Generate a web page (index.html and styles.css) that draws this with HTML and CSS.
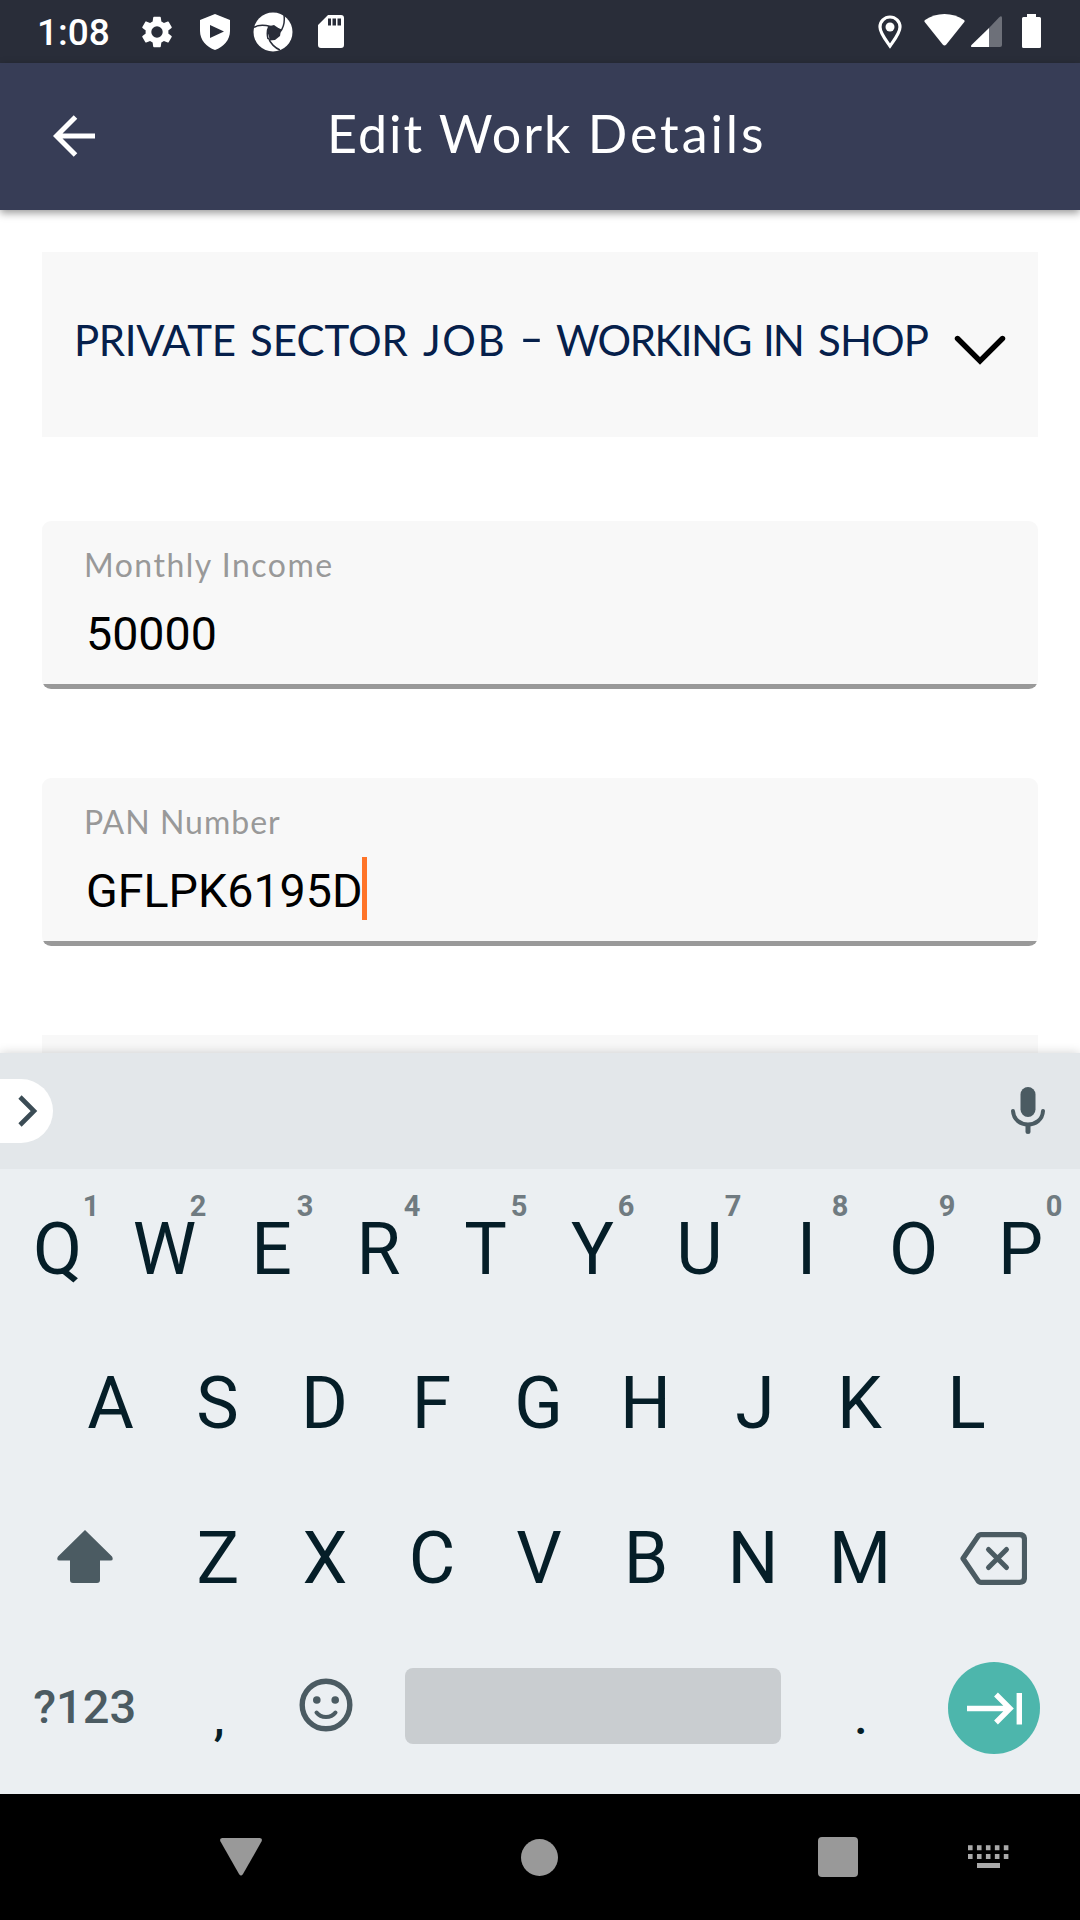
FILE: index.html
```html
<!DOCTYPE html>
<html lang="en">
<head>
<meta charset="utf-8">
<title>Edit Work Details</title>
<link rel="stylesheet" href="styles.css">
</head>
<body>
<div class="screen">
  <div class="status">
    <span class="clock">1:08</span>
    <svg class="gear" width="38" height="38" viewBox="0 0 24 24"><path fill="#fff" d="M19.14 12.94c.04-.3.06-.61.06-.94s-.02-.64-.07-.94l2.03-1.58a.49.49 0 0 0 .12-.61l-1.92-3.32a.49.49 0 0 0-.59-.22l-2.39.96c-.5-.38-1.03-.7-1.62-.94l-.36-2.54A.48.48 0 0 0 13.92 2.400h-3.840c-.24 0-.43.17-.47.41l-.36 2.540c-.59.24-1.130.57-1.620.94l-2.390-.96a.48.48 0 0 0-.59.22L2.740 8.870a.48.48 0 0 0 .12.61l2.030 1.580c-.05.3-.09.63-.09.94s.02.64.07.94l-2.030 1.580a.49.49 0 0 0-.12.61l1.920 3.320c.12.22.37.29.59.22l2.390-.96c.5.38 1.030.7 1.620.94l.36 2.540c.05.24.24.41.48.41h3.840c.24 0 .44-.17.47-.41l.36-2.540c.59-.24 1.130-.56 1.620-.94l2.390.96c.22.08.47 0 .59-.22l1.920-3.320a.48.48 0 0 0-.12-.61zM12 15.600a3.600 3.600 0 1 1 0-7.200 3.600 3.600 0 0 1 0 7.200z"/></svg>
    <svg class="shield" width="30" height="36" viewBox="0 0 30 36"><path fill="#fff" fill-rule="evenodd" d="M15 0 30 6v11c0 9-6.500 16-15 19C6.500 33 0 26 0 17V6zM10 11v13l14-6.500z"/></svg>
    <svg class="wheel" width="40" height="40" viewBox="0 0 40 40"><circle cx="20" cy="20" r="19.500" fill="#fff"/><path fill="#292d39" d="M15 14.500 21 13l7 5-1 6-5 4-5 .5-2-7z"/><path fill="none" stroke="#292d39" stroke-width="1.500" d="M0 16C5 12 14 12 28 18M31 3c1 7 0 12-4 17M27 38c-5-2-10-7-11.500-12M15 27c-1-4-1-9 1-13"/></svg>
    <svg class="sd" width="26" height="33" viewBox="0 0 26 33"><path fill="#fff" fill-rule="evenodd" d="M10 0h13a3 3 0 0 1 3 3v27a3 3 0 0 1-3 3H3a3 3 0 0 1-3-3V10zM10 3.500v7h3v-7zM14.500 3.500v7h3.500v-7zM19.500 3.500v7H23v-7z"/></svg>
    <span class="fill"></span>
    <svg class="pin" width="24" height="34" viewBox="0 0 24 34"><path fill="none" stroke="#fff" stroke-width="3.200" d="M12 31C7 24 2 18 2 12a10 10 0 0 1 20 0c0 6-5 12-10 19z"/><circle cx="12" cy="12" r="4.500" fill="#fff"/></svg>
    <svg class="wifi" width="41" height="32" viewBox="0 0 41 32"><path fill="#fff" d="M1 6C12-2 29-2 40 6q1 1 .3 2L22.300 30.500q-1.800 2-3.600 0L.7 8Q0 7 1 6z"/></svg>
    <svg class="signal" width="31" height="31" viewBox="0 0 31 31"><path fill="#6d7079" d="M18 12 28 1.500Q31-1 31 2v27q0 2-2 2H18z"/><path fill="#fff" d="M18 12v19H1.500Q-1 31 .5 29z"/></svg>
    <svg class="battery" width="19" height="34" viewBox="0 0 19 34"><path fill="#fff" d="M5 0h9v3h3.500q1.500 0 1.500 1.500v28q0 1.500-1.500 1.500h-16Q0 34 0 32.500v-28Q0 3 1.500 3H5z"/></svg>
  </div>

  <div class="appbar">
    <svg class="back" width="43" height="42" viewBox="0 0 43 42"><path fill="none" stroke="#fff" stroke-width="5" d="M22.500 2 3.500 21l19 19M3.500 21H42"/></svg>
    <div class="title">Edit Work <span class="title-last">Details</span></div>
  </div>

  <div class="form">
    <div class="select">
      <div class="select-text"><span class="w-private">PRIVATE</span> <span>SECTOR</span> <span class="w-job">JOB</span> <span class="w-dash">-</span> <span class="w-working">WORKING</span> <span class="w-in">IN</span> <span class="w-shop">SHOP</span></div>
      <svg class="chevron" width="52" height="30" viewBox="0 0 52 30"><path fill="none" stroke="#000" stroke-width="5.400" stroke-linecap="round" d="M3.500 3.500 26 26 48.500 3.500"/></svg>
    </div>
    <div class="field">
      <div class="label income">Monthly Income</div>
      <div class="value">50000</div>
    </div>
    <div class="field">
      <div class="label pan">PAN Number</div>
      <div class="value">GFLPK6195D<span class="caret"></span></div>
    </div>
    <div class="next"></div>
  </div>

  <div class="keyboard">
    <div class="strip">
      <div class="expand"><svg width="20" height="32" viewBox="0 0 20 32"><path fill="none" stroke="#3b4c55" stroke-width="4.600" d="M2 2l14 14L2 30"/></svg></div>
      <svg width="34" height="48" viewBox="0 0 34 48"><rect x="9.500" y="0" width="15" height="30" rx="7.500" fill="#4b5b62"/><path fill="none" stroke="#4b5b62" stroke-width="4" stroke-linecap="round" d="M2 24c1 18 29 18 30 0"/><path stroke="#4b5b62" stroke-width="5" stroke-linecap="round" d="M17 39v5.500"/></svg>
    </div>
    <div class="keys">
      <div class="row ten">
        <div class="key">Q<sup class="hint">1</sup></div><div class="key">W<sup class="hint">2</sup></div><div class="key">E<sup class="hint">3</sup></div><div class="key">R<sup class="hint">4</sup></div><div class="key">T<sup class="hint">5</sup></div><div class="key">Y<sup class="hint">6</sup></div><div class="key">U<sup class="hint">7</sup></div><div class="key">I<sup class="hint">8</sup></div><div class="key">O<sup class="hint">9</sup></div><div class="key">P<sup class="hint">0</sup></div>
      </div>
      <div class="row nine">
        <div class="key">A</div><div class="key">S</div><div class="key">D</div><div class="key">F</div><div class="key">G</div><div class="key">H</div><div class="key key-j">J</div><div class="key">K</div><div class="key">L</div>
      </div>
      <div class="row wide">
        <div class="key shift"><svg width="56" height="54" viewBox="0 0 56 54"><path fill="#4b5b62" d="M28 0 55 26.500q2 4-1.500 4H43V50q0 3-3 3H16q-3 0-3-3V30.500H2.500q-3.500 0-1.500-4z"/></svg></div>
        <div class="key">Z</div><div class="key">X</div><div class="key">C</div><div class="key">V</div><div class="key">B</div><div class="key">N</div><div class="key">M</div>
        <div class="key"><svg width="67" height="53" viewBox="0 0 67 53"><path fill="none" stroke="#4b5b62" stroke-width="5.200" stroke-linejoin="round" d="M21 2.600h38.500q5 0 5 5v37.800q0 5-5 5H21q-2 0-3.500-2.500L3 26.500 17.500 5.100Q19 2.600 21 2.600z"/><path stroke="#4b5b62" stroke-width="5" stroke-linecap="round" d="M28.500 17.500l18 18M46.500 17.500l-18 18"/></svg></div>
      </div>
      <div class="row wide bottom">
        <div class="key mode">?123</div>
        <div class="key punct">,</div>
        <div class="key emoji"><svg width="54" height="54" viewBox="0 0 54 54"><circle cx="27" cy="27" r="23.800" fill="none" stroke="#4b5b62" stroke-width="5.400"/><circle cx="17.800" cy="22" r="3.800" fill="#4b5b62"/><circle cx="36.200" cy="22" r="3.800" fill="#4b5b62"/><path fill="none" stroke="#4b5b62" stroke-width="4" stroke-linecap="round" d="M17.500 34.500c4.500 6 14.500 6 19 0"/></svg></div>
        <div class="space"></div>
        <div class="key punct">.</div>
        <div class="key enter"><svg width="92" height="92" viewBox="0 0 92 92"><circle cx="46" cy="46" r="46" fill="#4db6ac"/><path fill="none" stroke="#fff" stroke-width="5.400" d="M19 46.500h43M48 32.500l14 14-14 14M71.300 31v31.500"/></svg></div>
      </div>
    </div>
  </div>

  <div class="nav">
    <svg class="nav-back" width="42" height="38" viewBox="0 0 42 38"><path fill="#999" d="M2.500 0h37Q43 0 41.500 3.500L23 36q-2 3-4 0L.5 3.500Q-1 0 2.500 0z"/></svg>
    <svg class="nav-home" width="37" height="37" viewBox="0 0 37 37"><circle cx="18.500" cy="18.500" r="18.500" fill="#999"/></svg>
    <svg class="nav-recent" width="40" height="40" viewBox="0 0 40 40"><rect width="40" height="40" rx="4" fill="#999"/></svg>
    <svg class="nav-ime" width="41" height="24" viewBox="0 0 41 24"><path stroke="#aaa" stroke-width="5" stroke-dasharray="4.600 4.350" d="M0 2.800h41M0 11.600h41"/><path stroke="#aaa" stroke-width="5" d="M9 20.500h23"/></svg>
  </div>
</div>
</body>
</html>
```
FILE: styles.css
```css
* { box-sizing: border-box; }
body { margin: 0; background: #fff; font-family: Roboto, sans-serif; }
svg { display: block; flex: none; }
.screen { width: 1080px; height: 1920px; display: flex; flex-direction: column; overflow: hidden; }

.status { height: 63px; background: #292d39; display: flex; align-items: flex-start; padding: 14px 39px 0 37px; }
.clock { color: #fff; font-size: 37px; font-weight: 500; line-height: 38px; width: 101px; }
.gear { margin-top: -1px; }
.shield { margin-left: 24px; }
.wheel { margin: -2px 0 0 23px; }
.sd { margin: 1px 0 0 25px; }
.fill { flex: 1; }
.pin { margin: 1px 22px 0 0; }
.wifi { margin-right: 6px; }
.signal { margin: 2px 20px 0 0; }

.appbar { height: 147px; background: #373d56; display: flex; align-items: center; position: relative; z-index: 1; box-shadow: 0 3px 8px rgba(0, 0, 0, .4); padding: 0 0 1px 53px; }
.title { margin: 0 0 6px 231px; color: #fff; font: 400 52px/60px Lato, sans-serif; letter-spacing: 2px; white-space: nowrap; }
.title-last { letter-spacing: 2.900px; }

.form { height: 843px; padding: 42px 42px 0; overflow: hidden; }
.select { height: 185px; background: #f8f8f8; display: flex; align-items: center; justify-content: space-between; padding: 0 32px; color: #06204b; }
.select-text { display: grid; grid-template-columns: 176px 173px 96px 37px 207px 55px auto; margin-bottom: 9px; font: 400 42px/50px Lato, sans-serif; white-space: nowrap; }
.w-private { letter-spacing: -.35px; }
.w-job { letter-spacing: 1.600px; }
.w-dash { transform: translateY(-3px) scaleX(1.600); transform-origin: left; }
.w-working { letter-spacing: -1.500px; }
.w-in { letter-spacing: -2px; }
.w-shop { letter-spacing: -.9px; }
.chevron { margin-top: 10px; }
.field { height: 168px; margin-top: 84px; background: linear-gradient(#f8f8f8 163px, #999 163px); border-radius: 9px; padding: 24px 44px 0; }
.field + .field { margin-top: 89px; }
.label { margin-left: -2px; color: #999; font: 400 32px/40px Lato, sans-serif; white-space: nowrap; }
.income { letter-spacing: 1.500px; }
.pan { letter-spacing: 1px; }
.value { display: flex; align-items: center; height: 63px; margin-top: 17px; color: #000; font-size: 46.600px; }
.caret { width: 5px; height: 63px; margin: -4px 0 0 -1px; background: #ff7428; }
.next { height: 185px; margin-top: 89px; background: #f8f8f8; }

.keyboard { height: 741px; background: #ebeff2; position: relative; z-index: 1; box-shadow: 0 0 10px rgba(0, 0, 0, .18); }
.strip { height: 116px; background: #e3e7ea; display: flex; align-items: center; justify-content: space-between; padding-right: 35px; }
.expand { width: 53px; height: 64px; margin-top: -1px; background: #fff; border-radius: 0 32px 32px 0; display: flex; align-items: center; padding-left: 18px; }
.keys { padding: 3px 6px 0 4px; color: #051e28; }
.row { display: grid; height: 154.500px; }
.ten { grid-template-columns: repeat(10, 107px); }
.nine { grid-template-columns: repeat(9, 107px); padding-left: 53px; }
.wide { grid-template-columns: 160.500px repeat(7, 107px) 160.500px; }
.key { position: relative; display: flex; align-items: center; justify-content: center; font-size: 71.500px; }
.key-j { padding-left: 5px; }
.shift { padding: 0 0 2px 1px; }
.hint { position: absolute; left: 70px; width: 34px; top: 16px; text-align: center; color: #707b81; font-size: 29px; font-weight: 700; line-height: 36px; }
.bottom { height: 144px; }
.mode { font-size: 47px; font-weight: 500; color: #4b5b62; padding: 0 0 2px 1px; }
.punct { font-size: 48px; font-weight: 500; padding: 19px 0 0 2px; }
.emoji { padding: 0 0 5px 1px; }
.enter { padding-bottom: 0; }
.space { grid-column: span 4; margin: 32px 26px 36px; background: #c9cdd0; border-radius: 8px; }

.nav { height: 126px; background: #000; display: flex; align-items: center; padding-left: 220px; }
.nav-home { margin-left: 259px; }
.nav-recent { margin-left: 260px; }
.nav-ime { margin-left: 110px; }
```
